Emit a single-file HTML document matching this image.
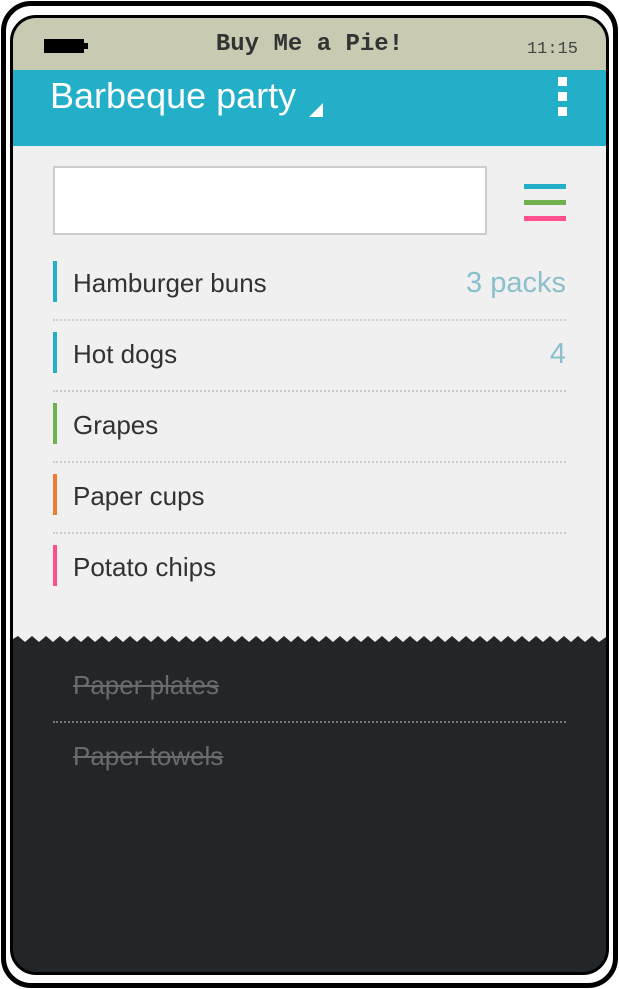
<!DOCTYPE html>
<html><head><style>
body{margin:0;width:619px;height:989px;background:#fff;position:relative;overflow:hidden;font-family:"Liberation Sans",sans-serif}
.outer{position:absolute;left:1px;top:1px;width:607px;height:977px;border:5px solid #000;border-radius:30px;background:#fff}
.screen{position:absolute;left:10px;top:15px;width:593px;height:954px;border:3px solid #000;border-radius:26px;overflow:hidden;background:#232628}
.status{position:absolute;left:0;top:0;width:100%;height:52px;background:#c8cbb1}
.hdr{position:absolute;left:0;top:52px;width:100%;height:76px;background:#23afc8}
.content{position:absolute;left:0;top:128px;width:100%;height:490px;background:#f0f0f0}
.item{position:absolute;left:40px;width:513px;height:71px}
.bar{position:absolute;left:0;top:11px;width:4px;height:41px}
.t{position:absolute;left:20px;top:18px;font-size:26px;color:#333230}
.q{position:absolute;right:0;top:17px;font-size:29px;color:#8bbfcc}
.div{position:absolute;left:40px;width:513px;border-top:2px dotted #ccc}
.dk{position:absolute;left:60px;font-size:26px;color:#6b6b6b;text-decoration:line-through}
</style></head><body>
<div class="outer"></div>
<div class="screen">
 <div class="status">
  <div style="position:absolute;left:31px;top:21px;width:40px;height:14px;background:#000"></div>
  <div style="position:absolute;left:71px;top:25px;width:4px;height:6px;background:#000"></div>
  <div style="position:absolute;left:0;width:100%;top:13px;text-align:center;font-family:'Liberation Mono',monospace;font-size:24px;font-weight:bold;color:#333">Buy Me a Pie!</div>
  <div style="position:absolute;right:28px;top:22px;font-family:'Liberation Mono',monospace;font-size:17px;color:#444">11:15</div>
 </div>
 <div class="hdr">
  <div style="position:absolute;left:37px;top:5px;font-size:36px;color:#fff">Barbeque party</div>
  <div style="position:absolute;left:296px;top:33px;width:0;height:0;border-left:14px solid transparent;border-bottom:14px solid #fff"></div>
  <div style="position:absolute;left:545px;top:7px;width:9px;height:9px;background:#fff"></div>
  <div style="position:absolute;left:545px;top:22px;width:9px;height:9px;background:#fff"></div>
  <div style="position:absolute;left:545px;top:37px;width:9px;height:9px;background:#fff"></div>
 </div>
 <div class="content">
  <div style="position:absolute;left:40px;top:20px;width:430px;height:65px;background:#fff;border:2px solid #ccc"></div>
  <div style="position:absolute;left:511px;top:38px;width:42px;height:5px;background:#23afc8"></div>
  <div style="position:absolute;left:511px;top:54px;width:42px;height:5px;background:#6fb04f"></div>
  <div style="position:absolute;left:511px;top:70px;width:42px;height:5px;background:#ff4f8f"></div>
  <div class="item" style="top:104px"><div class="bar" style="background:#23afc8"></div><div class="t">Hamburger buns</div><div class="q">3 packs</div></div>
  <div class="div" style="top:173px"></div>
  <div class="item" style="top:175px"><div class="bar" style="background:#23afc8"></div><div class="t">Hot dogs</div><div class="q">4</div></div>
  <div class="div" style="top:244px"></div>
  <div class="item" style="top:246px"><div class="bar" style="background:#6fb04f"></div><div class="t">Grapes</div></div>
  <div class="div" style="top:315px"></div>
  <div class="item" style="top:317px"><div class="bar" style="background:#ef7c35"></div><div class="t">Paper cups</div></div>
  <div class="div" style="top:386px"></div>
  <div class="item" style="top:388px"><div class="bar" style="background:#ff4f8f"></div><div class="t">Potato chips</div></div>
 </div>
 <svg style="position:absolute;left:0;top:617px" width="593" height="8"><polygon fill="#f0f0f0" points="0,0 593,0 593,2 586,7 579,1 572,7 565,1 558,7 551,1 544,7 537,1 530,7 523,1 516,7 509,1 502,7 495,1 488,7 481,1 474,7 467,1 460,7 453,1 446,7 439,1 432,7 425,1 418,7 411,1 404,7 397,1 390,7 383,1 376,7 369,1 362,7 355,1 348,7 341,1 334,7 327,1 320,7 313,1 306,7 299,1 292,7 285,1 278,7 271,1 264,7 257,1 250,7 243,1 236,7 229,1 222,7 215,1 208,7 201,1 194,7 187,1 180,7 173,1 166,7 159,1 152,7 145,1 138,7 131,1 124,7 117,1 110,7 103,1 96,7 89,1 82,7 75,1 68,7 61,1 54,7 47,1 40,7 33,1 26,7 19,1 12,7 5,1 0,4"/></svg>
 <div class="dk" style="top:652px">Paper plates</div>
 <div style="position:absolute;left:40px;top:703px;width:513px;border-top:2px dotted #777"></div>
 <div class="dk" style="top:723px">Paper towels</div>
</div>
</body></html>
